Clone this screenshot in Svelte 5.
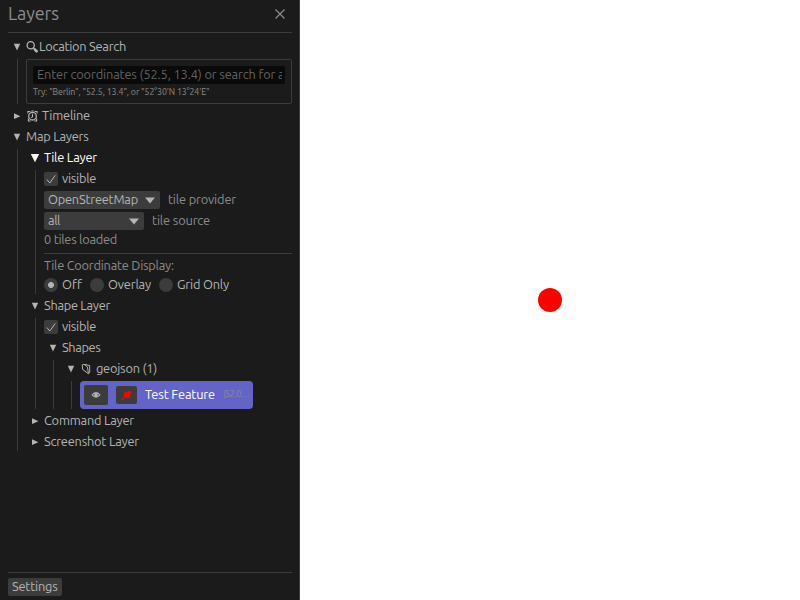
<script>
  function fit(node, width) {
    const natural = node.getBoundingClientRect().width;
    node.style.letterSpacing = `${(width - natural) / node.textContent.length}px`;
  }
</script>

{#snippet label(text, width)}<span class="label" use:fit={width}>{text}</span>{/snippet}

{#snippet header(text, width, open = true, icon = '', strong = false)}
  <div class="row header" class:strong>
    <svg class="arrow" viewBox="0 0 18 18">
      {#if strong}
        <path d="M4.8 5H13.2L9 13.2Z" />
      {:else if open}
        <path d="M5.8 5.8H12.2L9 12.6Z" />
      {:else}
        <path d="M6 6.3L12.4 9.2L6 12.1Z" />
      {/if}
    </svg>
    {#if icon === 'search'}
      <svg class="icon" width="13" height="14" viewBox="0 0 13 14">
        <circle cx="4.7" cy="5.2" r="3.6" stroke-width="1.3" /><path d="M7.3 7.8L8.6 9" stroke-width="1.4" /><path d="M8.2 8.9L11.4 12" stroke-width="2.6" />
      </svg>
    {:else if icon === 'clock'}
      <svg class="icon" width="16" height="14" viewBox="0 0 16 14">
        <circle cx="6.5" cy="7.2" r="3.8" stroke-width="1.3" /><path d="M6.5 4.8V7.5L5.3 8.8M1.9 4.6V2.5H4.4M11.1 4.6V2.5H8.6M2.4 9.5V12H4.6M10.6 9.5V12H8.4M5.3 2H7.7" stroke-width="1.1" />
      </svg>
    {:else if icon === 'folder'}
      <svg class="icon" width="16" height="14" viewBox="0 0 16 14">
        <path d="M2.3 2.8L4 2.2L7.5 5L8.4 11.7L2.6 7.4ZM5 2.5L9.6 3.5L9.8 10.3L8.4 11.7" />
      </svg>
    {/if}
    {@render label(text, width)}
  </div>
{/snippet}

{#snippet visible()}
  <div class="row">
    <svg class="check" width="14" height="14" viewBox="0 0 14 14">
      <rect width="14" height="14" rx="2" /><path d="M2.8 7.5L5.8 11L11.2 3.4" />
    </svg>
    {@render label('visible', 34)}
  </div>
{/snippet}

{#snippet combo(text, width, textWidth)}
  <div class="combo" style:width="{width}px">
    {@render label(text, textWidth)}
    <svg width="10" height="7" viewBox="0 0 10 7"><path d="M0 .5H10L5 6.5Z" /></svg>
  </div>
{/snippet}

<main>
  <aside>
    <div class="title">
      {@render label('Layers', 51)}
      <svg width="10" height="10" viewBox="0 0 10 10"><path d="M.5.5L9.5 9.5M9.5.5L.5 9.5" /></svg>
    </div>
    <div class="tree">
      {@render header('Location Search', 87, true, 'search')}
      <div class="body">
        <div class="group">
          <div class="field"><div class="clip">{@render label('Enter coordinates (52.5, 13.4) or search for a', 247.5)}</div></div>
          <div class="hint">{@render label(`Try: "Berlin", "52.5, 13.4", or "52°30'N 13°24'E"`, 176.5)}</div>
        </div>
      </div>
      {@render header('Timeline', 48, false, 'clock')}
      {@render header('Map Layers', 62.5)}
      <div class="body">
        {@render header('Tile Layer', 53, true, '', true)}
        <div class="body">
          {@render visible()}
          <div class="row wide">{@render combo('OpenStreetMap', 116, 90)}<span class="dim">{@render label('tile provider', 68)}</span></div>
          <div class="row wide">{@render combo('all', 100, 12)}<span class="dim">{@render label('tile source', 58)}</span></div>
          <div class="line dim">{@render label('0 tiles loaded', 73)}</div>
          <div class="rule"></div>
          <div class="line dim">{@render label('Tile Coordinate Display:', 130)}</div>
          <div class="row radios">
            <i class="on"></i>{@render label('Off', 20)}
            <i></i>{@render label('Overlay', 43)}
            <i></i>{@render label('Grid Only', 52)}
          </div>
        </div>
        {@render header('Shape Layer', 66)}
        <div class="body">
          {@render visible()}
          {@render header('Shapes', 38.5)}
          <div class="body">
            {@render header('geojson (1)', 61, true, 'folder')}
            <div class="body">
              <div class="feature">
                <span class="tool eye">
                  <svg width="10" height="8" viewBox="0 0 10 8"><path d="M.3 4Q5-1.8 9.7 4Q5 9.4 .3 4Z" fill="#b4b4b4" /><path d="M1.8 4Q2.6 2.8 3.4 2.5V5.5Q2.4 5 1.8 4M8.2 4Q7.4 2.8 6.6 2.5V5.5Q7.6 5 8.2 4" fill="#6a6a6a" /></svg>
                </span>
                <span class="tool pin">
                  <svg width="11" height="11" viewBox="0 0 11 11"><path d="M3.6 2L5.8 2.2L6.8 .8L9.6 1L10.2 3.6L9 5.4L9 8L6.8 8.2L4.2 7.4L1 10.4L.4 9.8L3.2 6.4L2.6 4.4Z" fill="#f00" /></svg>
                </span>
                <span class="name">{@render label('Test Feature', 70)}</span>
                <span class="coords">{@render label('(52.0…', 26)}</span>
              </div>
            </div>
          </div>
        </div>
        {@render header('Command Layer', 90, false)}
        {@render header('Screenshot Layer', 95, false)}
      </div>
    </div>
    <footer><button>{@render label('Settings', 45.5)}</button></footer>
  </aside>
  <section class="map"><div class="marker"></div></section>
</main>

<style>
  main {
    display: flex;
    width: 800px;
    height: 600px;
    overflow: hidden;
    background: #fff;
    color: #b4b4b4;
    font: 12.8px/18px Ubuntu, "Noto Sans", sans-serif;
  }
  aside {
    box-sizing: border-box;
    display: flex;
    flex-direction: column;
    width: 300px;
    padding: 0 7px 4px 8px;
    background: #1b1b1b;
    border-right: 1px solid #3c3c3c;
  }
  svg { flex: none; display: block; }
  .label { white-space: pre; flex: none; margin-bottom: 2px; }
  .title {
    display: flex;
    align-items: center;
    justify-content: space-between;
    box-sizing: border-box;
    height: 33px;
    padding: 0 7px 5px 0;
    border-bottom: 1px solid #3c3c3c;
    color: #8c8c8c;
    font-size: 18px;
  }
  .title svg { fill: none; stroke: #8c8c8c; stroke-width: 1.2; }
  .tree { flex: 1; padding-top: 5px; }
  .tree, .body { display: flex; flex-direction: column; gap: 3px; }
  .body { margin-left: 9px; padding-left: 8px; border-left: 1px solid #3c3c3c; }
  .row { display: flex; align-items: center; height: 18px; gap: 4px; }
  .header { gap: 0; }
  .strong { color: #fff; }
  .arrow { width: 18px; height: 18px; fill: currentColor; }
  .icon { fill: none; stroke: #b4b4b4; stroke-width: 1; }
  .group {
    box-sizing: border-box;
    height: 45px;
    padding: 6px;
    border: 1px solid #3c3c3c;
    border-radius: 2px;
  }
  .field {
    height: 18px;
    padding: 0 3px 0 4px;
    border-radius: 2px;
    background: #0a0a0a;
    color: #636363;
    line-height: 16px;
  }
  .clip { display: flex; height: 18px; overflow: hidden; }
  .hint { display: flex; margin-top: 2px; line-height: 12px; font-size: 8.8px; color: #8c8c8c; }
  .check rect { fill: #3c3c3c; }
  .check path { fill: none; stroke: #b4b4b4; }
  .combo {
    display: flex;
    align-items: center;
    justify-content: space-between;
    box-sizing: border-box;
    height: 18px;
    padding: 0 5px 0 4px;
    border-radius: 2px;
    background: #3c3c3c;
  }
  .combo svg { fill: #b4b4b4; }
  .wide { gap: 8px; }
  .dim { display: flex; color: #8c8c8c; }
  .line { height: 14px; line-height: 12px; }
  .rule { height: 1px; margin: 3px 0 2px; background: #3c3c3c; }
  i { width: 14px; height: 14px; border-radius: 50%; background: #3c3c3c; }
  i:not(:first-child) { margin-left: 4px; }
  .on { background: radial-gradient(circle, #b4b4b4 2.6px, #3c3c3c 3.3px); }
  .feature {
    display: flex;
    align-items: center;
    box-sizing: border-box;
    width: 173px;
    height: 28px;
    padding: 0 4px;
    border-radius: 4px;
    background: #6464c8;
  }
  .tool { display: flex; align-items: center; justify-content: center; border-radius: 2px; background: #3c3c3c; }
  .eye { width: 24px; height: 20px; }
  .pin { width: 21px; height: 18px; margin-left: 8px; }
  .name { display: flex; margin-left: 8px; color: #fff; }
  .coords { display: flex; margin-left: 8px; color: #8c8c96; font-size: 8.8px; }
  footer { padding-top: 5px; border-top: 1px solid #3c3c3c; }
  button {
    display: flex;
    height: 18px;
    padding: 0 4px;
    border: 0;
    border-radius: 2px;
    background: #3c3c3c;
    color: #b4b4b4;
    font: inherit;
    line-height: 16px;
  }
  .map { flex: 1; display: flex; align-items: center; justify-content: center; }
  .marker { width: 24px; height: 24px; border-radius: 50%; background: #f00; }
</style>
